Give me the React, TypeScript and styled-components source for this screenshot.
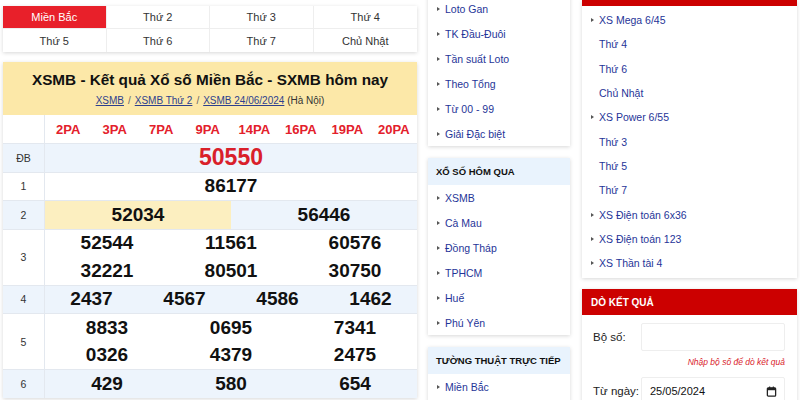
import React from 'react'
import styled, { createGlobalStyle, css } from 'styled-components'

const GlobalStyle = createGlobalStyle`
  html, body {
    margin: 0;
    padding: 0;
    background: #fff;
  }
  body {
    font-family: 'Liberation Sans', Arial, Helvetica, sans-serif;
    overflow: hidden;
    color: #222;
  }
`

const tabs = ['Miền Bắc', 'Thứ 2', 'Thứ 3', 'Thứ 4', 'Thứ 5', 'Thứ 6', 'Thứ 7', 'Chủ Nhật']
const paList = ['2PA', '3PA', '7PA', '9PA', '14PA', '16PA', '19PA', '20PA']

const prizes: { label: string; cols: number; nums: string[]; alt?: boolean; big?: boolean; hl?: number }[] = [
  { label: 'ĐB', cols: 1, nums: ['50550'], alt: true, big: true },
  { label: '1', cols: 1, nums: ['86177'] },
  { label: '2', cols: 2, nums: ['52034', '56446'], alt: true, hl: 0 },
  { label: '3', cols: 3, nums: ['52544', '11561', '60576', '32221', '80501', '30750'] },
  { label: '4', cols: 4, nums: ['2437', '4567', '4586', '1462'], alt: true },
  { label: '5', cols: 3, nums: ['8833', '0695', '7341', '0326', '4379', '2475'] },
  { label: '6', cols: 3, nums: ['429', '580', '654'], alt: true },
]

const statLinks = ['Loto Gan', 'TK Đầu-Đuôi', 'Tần suất Loto', 'Theo Tổng', 'Từ 00 - 99', 'Giải Đặc biệt']
const yesterday = ['XSMB', 'Cà Mau', 'Đồng Tháp', 'TPHCM', 'Huế', 'Phú Yên']

const vietlott: { text: string; sub?: boolean }[] = [
  { text: 'XS Mega 6/45' },
  { text: 'Thứ 4', sub: true },
  { text: 'Thứ 6', sub: true },
  { text: 'Chủ Nhật', sub: true },
  { text: 'XS Power 6/55' },
  { text: 'Thứ 3', sub: true },
  { text: 'Thứ 5', sub: true },
  { text: 'Thứ 7', sub: true },
  { text: 'XS Điện toán 6x36' },
  { text: 'XS Điện toán 123' },
  { text: 'XS Thần tài 4' },
]

export default function App() {
  return (
    <Page>
      <GlobalStyle />
      <LeftCol>
        <TabBox>
          {tabs.map((t, i) => (
            <Tab key={t} $active={i === 0}>{t}</Tab>
          ))}
        </TabBox>
        <ResultBox>
          <ResultHead>
            <Title>XSMB - Kết quả Xổ số Miền Bắc - SXMB hôm nay</Title>
            <Crumbs>
              <a>XSMB</a>
              <Sep>/</Sep>
              <a>XSMB Thứ 2</a>
              <Sep>/</Sep>
              <a>XSMB 24/06/2024</a> (Hà Nội)
            </Crumbs>
          </ResultHead>
          <Row>
            <Label />
            <Cells $cols={8}>
              {paList.map(p => (
                <Pa key={p}>{p}</Pa>
              ))}
            </Cells>
          </Row>
          {prizes.map(p => (
            <Row key={p.label} $alt={p.alt} $line>
              <Label>{p.label}</Label>
              <Cells $cols={p.cols}>
                {p.nums.map((n, i) => (
                  <Num key={i} $big={p.big} $hl={p.hl === i}>{n}</Num>
                ))}
              </Cells>
            </Row>
          ))}
        </ResultBox>
      </LeftCol>

      <MidCol>
        <SideBox>
          {statLinks.map(l => (
            <LinkItem key={l}><Arrow />{l}</LinkItem>
          ))}
        </SideBox>
        <SideBox>
          <SideHead>Xổ số hôm qua</SideHead>
          {yesterday.map(l => (
            <LinkItem key={l}><Arrow />{l}</LinkItem>
          ))}
        </SideBox>
        <SideBox $open>
          <SideHead>Tường thuật trực tiếp</SideHead>
          <LinkItem><Arrow />Miền Bắc</LinkItem>
        </SideBox>
      </MidCol>

      <RightCol>
        <RightBox>
          <RedStrip />
          <VList>
            {vietlott.map(v => (
              <VItem key={v.text}>
                {v.sub ? <ArrowSpace /> : <Arrow />}
                {v.text}
              </VItem>
            ))}
          </VList>
        </RightBox>
        <FormBox>
          <FormHead>Dò kết quả</FormHead>
          <FormBody>
            <FieldRow>
              <FieldLabel>Bộ số:</FieldLabel>
              <TextInput type="text" />
            </FieldRow>
            <Hint>Nhập bộ số để dò kết quả</Hint>
            <FieldRow>
              <FieldLabel>Từ ngày:</FieldLabel>
              <DateBox>
                <span>25/05/2024</span>
                <svg width="11" height="11" viewBox="0 0 12 12">
                  <rect x="1.5" y="2" width="9" height="9" rx="1" fill="none" stroke="#222" strokeWidth="1.4" />
                  <rect x="1.5" y="2" width="9" height="2.6" fill="#222" />
                  <line x1="4" y1="0.5" x2="4" y2="2.5" stroke="#222" strokeWidth="1.2" />
                  <line x1="8" y1="0.5" x2="8" y2="2.5" stroke="#222" strokeWidth="1.2" />
                </svg>
              </DateBox>
            </FieldRow>
          </FormBody>
        </FormBox>
      </RightCol>
    </Page>
  )
}

const Page = styled.div`
  display: grid;
  grid-template-columns: 414px 143px 215px;
  column-gap: 11px;
  padding-left: 3px;
  width: 800px;
  height: 400px;
  overflow: hidden;
  align-items: start;
`
const LeftCol = styled.div`
  display: flex;
  flex-direction: column;
  gap: 10px;
  padding-top: 6px;
`
const panel = css`
  background: #fff;
  box-shadow: 0 1px 4px rgba(0, 0, 0, 0.16);
`
const TabBox = styled.div`
  ${panel};
  display: grid;
  grid-template-columns: repeat(4, 1fr);
  grid-auto-rows: 23px;
`
const Tab = styled.div<{ $active?: boolean }>`
  display: flex;
  align-items: center;
  justify-content: center;
  font-size: 11px;
  color: #333;
  border-right: 1px solid #eee;
  border-bottom: 1px solid #eee;
  &:nth-child(4n) {
    border-right: none;
  }
  &:nth-child(n + 5) {
    border-bottom: none;
  }
  ${({ $active }) =>
    $active &&
    css`
      background: #e8202a;
      color: #fff;
    `}
`
const ResultBox = styled.div`
  ${panel};
`
const ResultHead = styled.div`
  background: #fce8a8;
  height: 53px;
  display: flex;
  flex-direction: column;
  align-items: center;
  padding-top: 9px;
  box-sizing: border-box;
`
const Title = styled.h1`
  margin: 0;
  font-size: 15.3px;
  line-height: 18px;
  font-weight: 700;
  color: #111;
`
const Crumbs = styled.div`
  margin-top: 6px;
  font-size: 10px;
  color: #333;
  a {
    color: #2d3f8e;
    text-decoration: underline;
  }
`
const Sep = styled.span`
  color: #666;
  margin: 0 4px;
`
const Row = styled.div<{ $alt?: boolean; $line?: boolean }>`
  display: grid;
  grid-template-columns: 42px 1fr;
  background: ${({ $alt }) => ($alt ? '#edf4fc' : '#fff')};
  border-top: ${({ $line }) => ($line ? '1px solid #e3e8ef' : 'none')};
`
const Label = styled.div`
  display: flex;
  align-items: center;
  justify-content: center;
  font-size: 10.5px;
  color: #333;
  border-right: 1px solid #e3e8ef;
`
const Cells = styled.div<{ $cols: number }>`
  display: grid;
  grid-template-columns: repeat(${({ $cols }) => $cols}, 1fr);
`
const Pa = styled.div`
  height: 28px;
  display: flex;
  align-items: center;
  justify-content: center;
  font-size: 13px;
  font-weight: 700;
  color: #e3202b;
`
const Num = styled.div<{ $big?: boolean; $hl?: boolean }>`
  height: 27.5px;
  display: flex;
  align-items: center;
  justify-content: center;
  font-weight: 700;
  font-size: ${({ $big }) => ($big ? '23px' : '19px')};
  color: ${({ $big }) => ($big ? '#d9202a' : '#111')};
  background: ${({ $hl }) => ($hl ? '#fcefc0' : 'transparent')};
`
const MidCol = styled.div`
  display: flex;
  flex-direction: column;
  gap: 12px;
  margin-top: -4px;
`
const SideBox = styled.div<{ $open?: boolean }>`
  ${panel};
  width: 142px;
  padding-bottom: ${({ $open }) => ($open ? '30px' : '0')};
`
const SideHead = styled.div`
  height: 27px;
  display: flex;
  align-items: center;
  padding-left: 8px;
  background: #e9f3fd;
  font-size: 9.5px;
  font-weight: 700;
  text-transform: uppercase;
  color: #111;
`
const LinkItem = styled.div`
  height: 25px;
  display: flex;
  align-items: center;
  padding-left: 9px;
  font-size: 10.5px;
  color: #1f3598;
`
const Arrow = styled.span`
  width: 0;
  height: 0;
  border-top: 2.5px solid transparent;
  border-bottom: 2.5px solid transparent;
  border-left: 3px solid #555;
  margin-right: 5px;
`
const ArrowSpace = styled.span`
  width: 3px;
  margin-right: 5px;
`
const RightCol = styled.div`
  display: flex;
  flex-direction: column;
  gap: 11px;
`
const RightBox = styled.div`
  ${panel};
`
const RedStrip = styled.div`
  height: 6px;
  background: #cc0000;
`
const VList = styled.div`
  padding: 2px 0 3px;
`
const VItem = styled.div`
  height: 24.3px;
  display: flex;
  align-items: center;
  padding-left: 9px;
  font-size: 10.5px;
  color: #1f3598;
`
const FormBox = styled.div`
  ${panel};
`
const FormHead = styled.div`
  height: 26px;
  display: flex;
  align-items: center;
  padding-left: 9px;
  background: #cc0000;
  color: #fff;
  font-size: 10px;
  font-weight: 700;
  text-transform: uppercase;
`
const FormBody = styled.div`
  padding: 8px 12px 10px 11px;
`
const FieldRow = styled.div`
  display: grid;
  grid-template-columns: 48px 1fr;
  align-items: center;
`
const FieldLabel = styled.div`
  font-size: 11.5px;
  color: #222;
`
const inputLook = css`
  height: 28px;
  box-sizing: border-box;
  border: 1px solid #eeeeee;
  border-radius: 2px;
  background: #fff;
`
const TextInput = styled.input`
  ${inputLook};
  width: 100%;
  outline: none;
`
const Hint = styled.div`
  text-align: right;
  font-size: 8.5px;
  font-style: italic;
  color: #d9232b;
  margin: 6px 0 10px;
`
const DateBox = styled.div`
  ${inputLook};
  display: flex;
  align-items: center;
  justify-content: space-between;
  padding: 0 7px 0 8px;
  font-size: 11px;
  color: #111;
`
